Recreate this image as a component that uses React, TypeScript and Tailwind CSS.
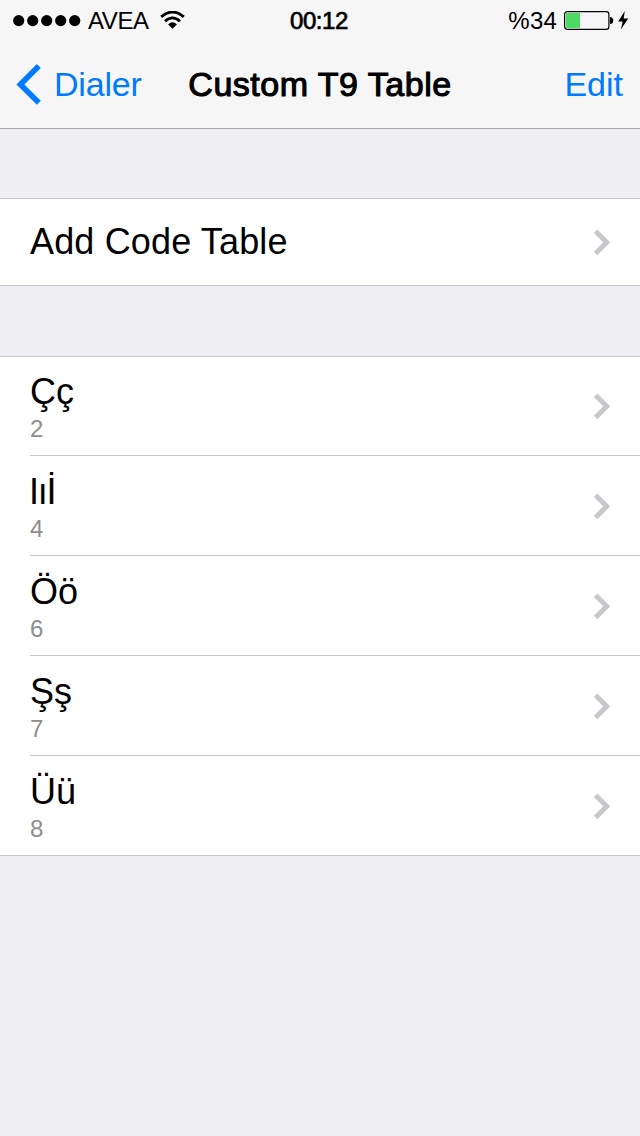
import clsx from "clsx"

type CodeEntry = {
  letters: string
  digit: string
  tight?: boolean
}

const entries: CodeEntry[] = [
  { letters: "Çç", digit: "2" },
  { letters: "Iıİ", digit: "4", tight: true },
  { letters: "Öö", digit: "6" },
  { letters: "Şş", digit: "7" },
  { letters: "Üü", digit: "8" },
]

function Chevron() {
  return (
    <svg width="18" height="26" viewBox="0 0 18 26" className="mr-[29px] shrink-0">
      <path d="M2.6 2.2L13.7 13.3L2.6 24.4" fill="none" stroke="#c7c7cc" strokeWidth="5" />
    </svg>
  )
}

function StatusBar() {
  return (
    <div className="grid h-10 grid-cols-3 items-center pt-px text-2xl leading-10">
      <div className="flex h-10 items-center pl-[13px]">
        <svg width="68" height="12" viewBox="0 0 68 12">
          {[5.7, 19.7, 33.7, 47.7, 61.7].map((cx) => (
            <circle key={cx} cx={cx} cy="5.6" r="5.6" />
          ))}
        </svg>
        <span className="ml-[7px] w-[72px] tracking-[-0.4px]">AVEA</span>
        <svg width="26" height="20" viewBox="0 0 26 20">
          <path d="M1.2 5.9Q12.5 -3.8 23.8 5.9" fill="none" stroke="#000" strokeWidth="2.9" />
          <path d="M5 10.2Q12.5 3.5 20 10.2" fill="none" stroke="#000" strokeWidth="2.8" />
          <path d="M8.1 13.4Q12.5 9.2 16.9 13.4L12.5 17.8Z" />
        </svg>
      </div>

      <div className="pr-[2px] text-center tracking-[-0.4px] [-webkit-text-stroke:0.7px_#000]">00:12</div>

      <div className="flex h-10 items-center justify-end pr-[11px]">
        <span className="mr-[7px] tracking-[0.2px]">%34</span>
        <svg width="50" height="20" viewBox="0 0 50 20">
          <rect x="0.6" y="0.6" width="44.3" height="17.8" rx="2.6" fill="none" stroke="#000" strokeWidth="1.2" />
          <rect x="2" y="2" width="14" height="15" fill="#4cd964" />
          <path d="M46 6Q49.2 6 49.2 9.5T46 13Z" />
        </svg>
        <svg width="11" height="20" viewBox="0 0 11 20" className="ml-1">
          <path d="M6.8 0L0.2 10.4H4.7L2.8 18.4L10.3 7.4H5.7Z" />
        </svg>
      </div>
    </div>
  )
}

export default function App() {
  return (
    <div className="min-h-screen w-[640px] overflow-hidden bg-[#efeff4] font-['Liberation_Sans',Arial,sans-serif] text-black">
      {/* HEADER */}
      <header className="h-[129px] border-b border-[#a9a9ab] bg-[#f6f6f6]">
        <StatusBar />
        <nav className="grid h-[88px] grid-cols-[180px_1fr_180px] items-center text-[34px] leading-[88px]">
          <button className="flex h-[88px] items-center pl-4 text-[#007aff]">
            <svg width="26" height="42" viewBox="0 0 26 42">
              <path d="M22.8 3L4.4 21.4L22.8 39.8" fill="none" stroke="#007aff" strokeWidth="5.6" />
            </svg>
            <span className="ml-3 tracking-[-0.2px]">Dialer</span>
          </button>
          <h1 className="text-center tracking-[0.5px] whitespace-nowrap [-webkit-text-stroke:1.1px_#000]">
            Custom T9 Table
          </h1>
          <button className="pr-[17px] text-right text-[#007aff]">Edit</button>
        </nav>
      </header>

      {/* ADD */}
      <section className="mt-[69px] flex h-[88px] items-center justify-between border-y border-[#c8c7cc] bg-white pl-[30px]">
        <span className="text-4xl tracking-[0.15px]">Add Code Table</span>
        <Chevron />
      </section>

      {/* ENTRIES */}
      <ul className="mt-[70px] border-y border-[#c8c7cc] bg-white pl-[30px]">
        {entries.map((entry) => (
          <li
            key={entry.digit}
            className="flex h-[100px] items-center justify-between border-b border-[#c8c7cc] first:h-[99px] last:h-[99px] last:border-b-0"
          >
            <div className="pt-1">
              <p className={clsx("text-4xl leading-[42px]", entry.tight && "-ml-px tracking-[-1.3px]")}>
                {entry.letters}
              </p>
              <p className="text-2xl leading-8 text-[#8e8e8e]">{entry.digit}</p>
            </div>
            <Chevron />
          </li>
        ))}
      </ul>
    </div>
  )
}
